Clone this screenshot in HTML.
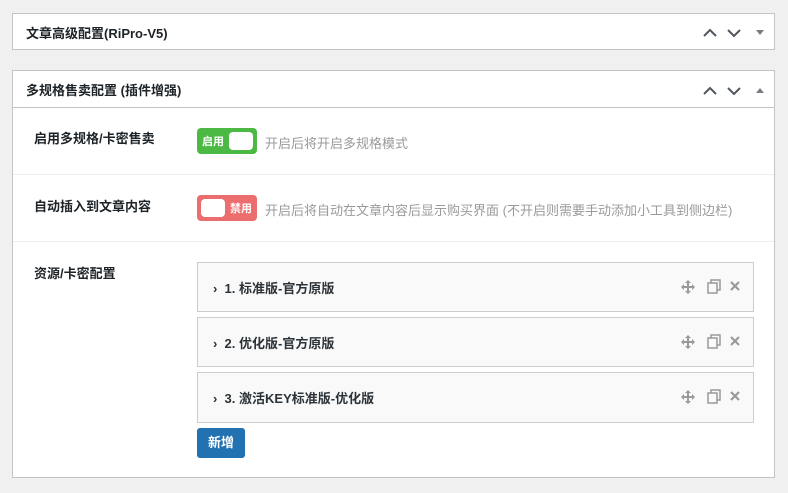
<!DOCTYPE html>
<html><head><meta charset="utf-8"><style>
*{box-sizing:border-box;margin:0;padding:0}
body{width:788px;height:493px;background:#f0f0f1;font-family:"Liberation Sans","Noto Sans CJK SC",sans-serif;position:relative;overflow:hidden;color:#23282d}
.box{position:absolute;left:12px;width:763px;background:#fff;border:1px solid #c3c4c7}
.h{position:absolute;left:13px;font-size:13px;font-weight:bold;color:#1d2327}
.abs{position:absolute}
.lbl{position:absolute;left:21px;font-size:13px;font-weight:bold;color:#1d2327}
.tg{position:absolute;left:184px;width:60px;height:26px;border-radius:4px}
.tg .k{position:absolute;top:4px;width:24px;height:18px;background:#fff;border-radius:4px}
.tg span{position:absolute;top:5px;font-size:11px;color:#fff;font-weight:bold}
.desc{position:absolute;left:252px;font-size:13px;color:#9a9a9a}
.item{position:absolute;left:184px;width:557px;background:#f9f9f9;border:1px solid #ccc}
.item .t{position:absolute;left:15px;top:15px;font-size:13px;font-weight:bold;color:#2c3338}
.ic{position:absolute;top:16px;color:#999}
</style></head><body>
<div class="box" style="top:13px;height:37px">
 <div class="h" style="top:9px">文章高级配置(RiPro-V5)</div>
 <svg class="abs" style="left:689px;top:12px" width="62" height="12"><g fill="none" stroke="#50575e" stroke-width="2"><path d="M2 10 L8 4 L14 10"/><path d="M26 4 L32 10 L38 4"/></g><path d="M54 4 L62 4 L58 9Z" fill="#787c82"/></svg>
</div>
<div class="box" style="top:70px;height:408px">
 <div class="h" style="top:9px">多规格售卖配置 (插件增强)</div>
 <svg class="abs" style="left:689px;top:13px" width="62" height="12"><g fill="none" stroke="#50575e" stroke-width="2"><path d="M2 10 L8 4 L14 10"/><path d="M26 4 L32 10 L38 4"/></g><path d="M54 9 L62 9 L58 4Z" fill="#787c82"/></svg>
 <div class="abs" style="left:0;right:0;top:36px;border-top:1px solid #c3c4c7"></div>
 <div class="lbl" style="top:57px">启用多规格/卡密售卖</div>
 <div class="tg" style="top:57px;background:#4cb945"><span style="left:5px">启用</span><div class="k" style="right:4px"></div></div>
 <div class="desc" style="top:62px">开启后将开启多规格模式</div>
 <div class="abs" style="left:0;right:0;top:103px;border-top:1px solid #eee"></div>
 <div class="lbl" style="top:125px">自动插入到文章内容</div>
 <div class="tg" style="top:124px;background:#ec6d6d"><div class="k" style="left:4px"></div><span style="right:5px">禁用</span></div>
 <div class="desc" style="top:129px">开启后将自动在文章内容后显示购买界面 (不开启则需要手动添加小工具到侧边栏)</div>
 <div class="abs" style="left:0;right:0;top:170px;border-top:1px solid #eee"></div>
 <div class="lbl" style="top:192px">资源/卡密配置</div>
 <div class="item" style="top:191px;height:50px"><div class="t">›&nbsp; 1. 标准版-官方原版</div><svg class="ic" style="left:483px" width="60" height="16"><g fill="#999"><path d="M7 1 L10 4 H8 V7 H11 V5 L14 8 L11 11 V9 H8 V12 H10 L7 15 L4 12 H6 V9 H3 V11 L0 8 L3 5 V7 H6 V4 H4Z"/></g><g fill="none" stroke="#999" stroke-width="1.5"><rect x="27" y="4" width="9" height="10"/><path d="M30 4 V1 H39 V11 H36"/><path d="M50 3 L58 11 M58 3 L50 11" stroke-width="2.2"/></g></svg></div>
 <div class="item" style="top:246px;height:50px"><div class="t">›&nbsp; 2. 优化版-官方原版</div><svg class="ic" style="left:483px" width="60" height="16"><g fill="#999"><path d="M7 1 L10 4 H8 V7 H11 V5 L14 8 L11 11 V9 H8 V12 H10 L7 15 L4 12 H6 V9 H3 V11 L0 8 L3 5 V7 H6 V4 H4Z"/></g><g fill="none" stroke="#999" stroke-width="1.5"><rect x="27" y="4" width="9" height="10"/><path d="M30 4 V1 H39 V11 H36"/><path d="M50 3 L58 11 M58 3 L50 11" stroke-width="2.2"/></g></svg></div>
 <div class="item" style="top:301px;height:51px"><div class="t">›&nbsp; 3. 激活KEY标准版-优化版</div><svg class="ic" style="left:483px" width="60" height="16"><g fill="#999"><path d="M7 1 L10 4 H8 V7 H11 V5 L14 8 L11 11 V9 H8 V12 H10 L7 15 L4 12 H6 V9 H3 V11 L0 8 L3 5 V7 H6 V4 H4Z"/></g><g fill="none" stroke="#999" stroke-width="1.5"><rect x="27" y="4" width="9" height="10"/><path d="M30 4 V1 H39 V11 H36"/><path d="M50 3 L58 11 M58 3 L50 11" stroke-width="2.2"/></g></svg></div>
 <div class="abs" style="left:184px;top:357px;width:48px;height:30px;background:#2271b1;border-radius:3px;color:#fff;font-size:13px;font-weight:bold;text-align:center;line-height:30px">新增</div>
</div>
</body></html>
